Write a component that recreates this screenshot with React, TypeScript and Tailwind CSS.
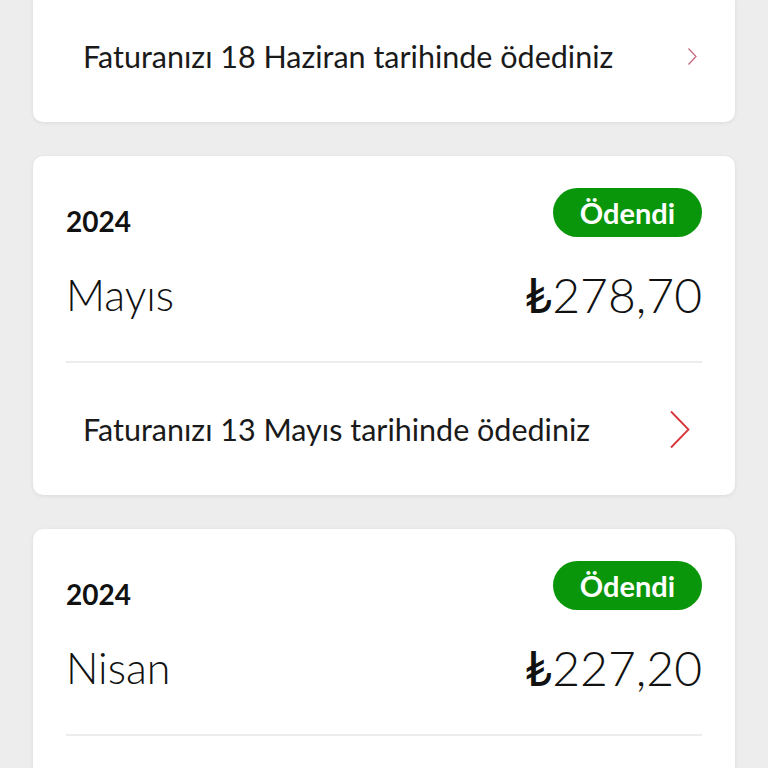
const bills = [
  { year: "2024", month: "Haziran", amount: "312,40", paidOn: "Faturanızı 18 Haziran tarihinde ödediniz", faded: true, head: false, foot: true },
  { year: "2024", month: "Mayıs", amount: "278,70", paidOn: "Faturanızı 13 Mayıs tarihinde ödediniz", faded: false, head: true, foot: true },
  { year: "2024", month: "Nisan", amount: "227,20", paidOn: "Faturanızı 12 Nisan tarihinde ödediniz", faded: false, head: true, foot: false },
];

function Chevron({ faded }: { faded: boolean }) {
  if (faded) {
    return (
      <svg width="11" height="19" viewBox="0 0 11 19" fill="none" className="mr-[4px]">
        <path d="M1.5 1.5 L9 9.5 L1.5 17.5" stroke="#c86a7e" strokeWidth="1.3" />
      </svg>
    );
  }
  return (
    <svg width="22" height="39" viewBox="0 0 22 39" fill="none" className="mr-[11px]">
      <path d="M2 1.5 L19.5 19.5 L2 37.5" stroke="#d8353a" strokeWidth="1.8" />
    </svg>
  );
}

export default function App() {
  return (
    <div
      className="h-screen bg-[#ededed] px-[33px] overflow-hidden"
      style={{ fontFamily: "Lato, 'Open Sans', sans-serif" }}
    >
      <div className="flex flex-col gap-[34px] mt-[-10px]">
        {bills.map((bill) => (
          <div
            key={bill.month}
            className="bg-white rounded-[10px] shadow-[0_1px_4px_rgba(0,0,0,0.08)] px-[33px]"
          >
            {bill.head && (
              <>
                <div className="pt-[32px] flex justify-between items-end">
                  <span className="text-[28px] font-bold leading-[32px] text-[#111]">{bill.year}</span>
                  <span className="h-[49px] w-[149px] rounded-full bg-[#0a960a] text-white text-[29px] font-bold flex items-center justify-center">
                    Ödendi
                  </span>
                </div>
                <div className="mt-[34px] flex justify-between items-center h-[48px] font-light text-[#111] leading-[48px]">
                  <span className="text-[43px]">{bill.month}</span>
                  <span className="text-[48px]">
                    <span className="font-normal">₺</span>
                    {bill.amount}
                  </span>
                </div>
                <div className="mt-[42px] h-[2px] bg-[#ececec]" />
              </>
            )}
            {bill.foot ? (
              <div className="pt-[48px] pb-[48px] flex justify-between items-center h-[132px]">
                <span className="text-[30.5px] leading-[36px] text-[#1a1a1a] pl-[17px]">{bill.paidOn}</span>
                <Chevron faded={bill.faded} />
              </div>
            ) : (
              <div className="h-[132px]" />
            )}
          </div>
        ))}
      </div>
    </div>
  );
}
